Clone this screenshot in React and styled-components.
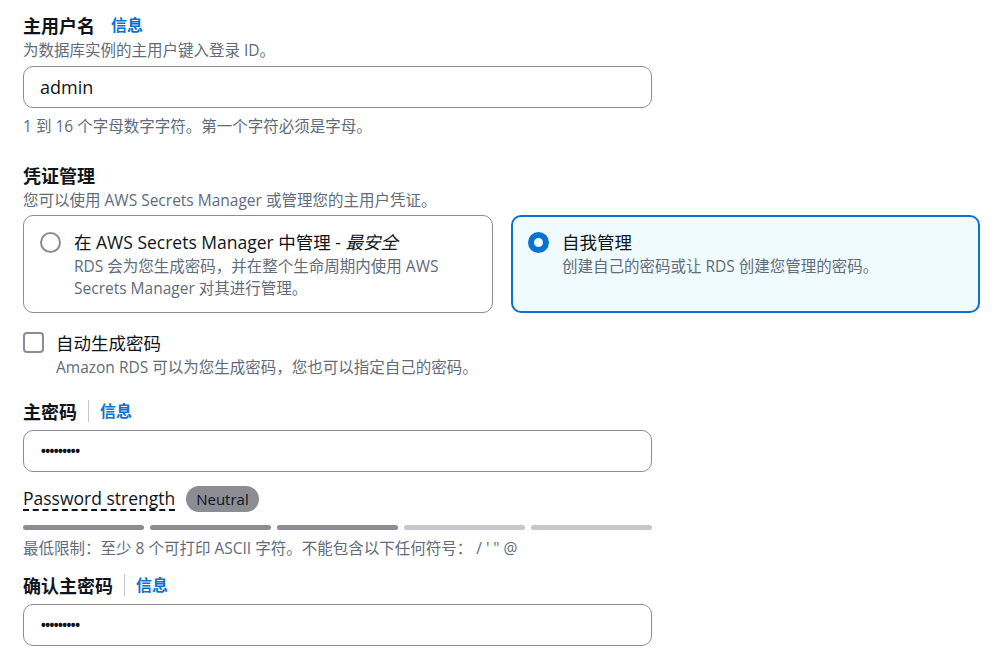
import React from "react";
import styled, { createGlobalStyle } from "styled-components";

const G = createGlobalStyle`
  body{margin:0;background:#fff;font-family:"Open Sans","Noto Sans CJK SC",sans-serif;color:#0f141a;}
`;
const Page = styled.div`padding:11px 20px 0 23px;display:flex;flex-direction:column;`;
const Field = styled.div`display:flex;flex-direction:column;margin-bottom:${p=>p.mb||0}px;`;
const LabelRow = styled.div`display:flex;align-items:center;height:28px;`;
const Label = styled.span`font-size:18px;font-weight:700;`;
const Info = styled.a`color:#0972d3;font-size:16px;font-weight:600;padding-left:${p=>p.sep?11:16}px;margin-left:${p=>p.sep?11:0}px;border-left:${p=>p.sep?"1px solid #c6c6cd":"none"};line-height:22px;`;
const Desc = styled.div`font-size:15.5px;color:#5f6b7a;line-height:22px;`;
const Input = styled.div`box-sizing:border-box;width:629px;height:42px;border:1px solid #8c8c94;border-radius:10px;display:flex;align-items:center;padding:0 16px;font-size:${p=>p.pw?"18px":"18px"};letter-spacing:${p=>p.pw?"-2.5px":"0"};margin-top:${p=>p.mt||0}px;`;
const Hint = styled.div`font-size:15.5px;color:#5f6b7a;margin-top:6px;`;
const Cards = styled.div`display:flex;gap:18px;margin-top:4px;`;
const Card = styled.div`box-sizing:border-box;width:${p=>p.w}px;height:98px;border-radius:10px;border:${p=>p.sel?"2px solid #0972d3":"1px solid #8c8c94"};background:${p=>p.sel?"#f0fbff":"#fff"};padding:${p=>p.sel?"12px 16px 12px 15px":"13px 17px 13px 16px"};display:flex;gap:13px;`;
const Radio = styled.div`flex:none;width:21px;height:21px;border-radius:50%;box-sizing:border-box;margin-top:3px;border:${p=>p.on?"6px solid #0972d3":"2px solid #8c8c94"};`;
const CardTitle = styled.div`font-size:17.5px;line-height:26px;`;
const CardDesc = styled.div`font-size:15.5px;color:#5f6b7a;line-height:22px;`;
const Check = styled.div`display:flex;gap:12px;margin-top:17px;`;
const Box = styled.div`flex:none;width:21px;height:21px;border:2px solid #8c8c94;border-radius:4px;box-sizing:border-box;margin-top:2px;`;
const Strength = styled.div`display:flex;align-items:center;gap:11px;margin-top:14px;`;
const StrLabel = styled.span`font-size:17.5px;border-bottom:2px dashed #0f141a;line-height:22px;`;
const Badge = styled.span`background:#8c8c94;color:#0f141a;font-size:15px;border-radius:14px;padding:3px 10px;`;
const Bars = styled.div`display:flex;gap:6px;width:629px;margin-top:13px;`;
const Bar = styled.div`flex:1;height:5px;border-radius:3px;background:${p=>p.on?"#8c8c94":"#c6c6cd"};`;

export default function App(){
  return <Page><G/>
    <Field mb={24}>
      <LabelRow><Label>主用户名</Label><Info>信息</Info></LabelRow>
      <Desc>为数据库实例的主用户键入登录 ID。</Desc>
      <Input mt={5}>admin</Input>
      <Hint>1 到 16 个字母数字字符。第一个字符必须是字母。</Hint>
    </Field>
    <Field>
      <LabelRow><Label>凭证管理</Label></LabelRow>
      <Desc>您可以使用 AWS Secrets Manager 或管理您的主用户凭证。</Desc>
      <Cards>
        <Card w={471}><Radio/><div><CardTitle>在 AWS Secrets Manager 中管理 - <i>最安全</i></CardTitle><CardDesc>RDS 会为您生成密码，并在整个生命周期内使用 AWS Secrets Manager 对其进行管理。</CardDesc></div></Card>
        <Card w={470} sel><Radio on/><div><CardTitle>自我管理</CardTitle><CardDesc>创建自己的密码或让 RDS 创建您管理的密码。</CardDesc></div></Card>
      </Cards>
      <Check><Box/><div><CardTitle>自动生成密码</CardTitle><CardDesc>Amazon RDS 可以为您生成密码，您也可以指定自己的密码。</CardDesc></div></Check>
    </Field>
    <Field>
      <LabelRow style={{marginTop:19}}><Label>主密码</Label><Info sep>信息</Info></LabelRow>
      <Input pw mt={5}>•••••••••</Input>
      <Strength><StrLabel>Password strength</StrLabel><Badge>Neutral</Badge></Strength>
      <Bars>{[1,1,1,0,0].map((o,i)=><Bar key={i} on={o}/>)}</Bars>
      <Hint>最低限制：至少 8 个可打印 ASCII 字符。不能包含以下任何符号：  / ' " @</Hint>
    </Field>
    <Field>
      <LabelRow style={{marginTop:12}}><Label>确认主密码</Label><Info sep>信息</Info></LabelRow>
      <Input pw mt={5}>•••••••••</Input>
    </Field>
  </Page>;
}
